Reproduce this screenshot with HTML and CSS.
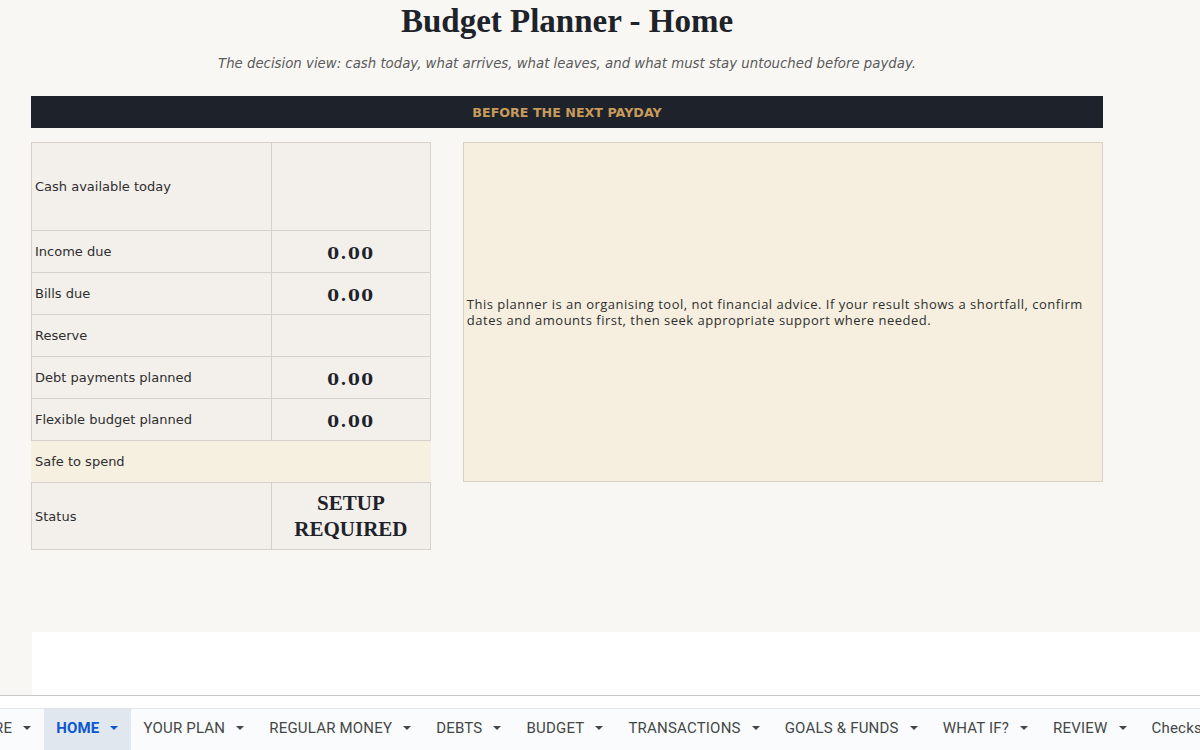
FILE: index.html
```html
<!DOCTYPE html>
<html lang="en">
<head>
<meta charset="utf-8">
<title>Budget Planner - Home</title>
<link rel="stylesheet" href="styles.css">
</head>
<body>
<div class="page">
  <div class="sheet">
    <h1 class="title">Budget Planner - Home</h1>
    <p class="subtitle">The decision view: cash today, what arrives, what leaves, and what must stay untouched before payday.</p>
    <div class="bar">BEFORE THE NEXT PAYDAY</div>
    <div class="content">
      <table class="summary">
        <tr class="tall"><td class="label">Cash available today</td><td class="value"></td></tr>
        <tr><td class="label">Income due</td><td class="value">0.00</td></tr>
        <tr><td class="label">Bills due</td><td class="value">0.00</td></tr>
        <tr><td class="label">Reserve</td><td class="value"></td></tr>
        <tr><td class="label">Debt payments planned</td><td class="value">0.00</td></tr>
        <tr><td class="label">Flexible budget planned</td><td class="value">0.00</td></tr>
        <tr class="safe"><td class="label" colspan="2">Safe to spend</td></tr>
        <tr class="status"><td class="label">Status</td><td class="value big">SETUP<br>REQUIRED</td></tr>
      </table>
      <div class="note">This planner is an organising tool, not financial advice. If your result shows a shortfall, confirm dates and amounts first, then seek appropriate support where needed.</div>
    </div>
  </div>
</div>
<div class="blank"><div class="blank-cells"></div></div>
<div class="scrollbar"></div>
<nav class="tabbar">
  <div class="tab first">RE <svg class="arrow" viewBox="0 0 8 4" width="8" height="4"><path d="M0 0h8L4 4z"/></svg></div>
  <div class="tab active">HOME <svg class="arrow" viewBox="0 0 8 4" width="8" height="4"><path d="M0 0h8L4 4z"/></svg></div>
  <div class="tab">YOUR PLAN <svg class="arrow" viewBox="0 0 8 4" width="8" height="4"><path d="M0 0h8L4 4z"/></svg></div>
  <div class="tab">REGULAR MONEY <svg class="arrow" viewBox="0 0 8 4" width="8" height="4"><path d="M0 0h8L4 4z"/></svg></div>
  <div class="tab">DEBTS <svg class="arrow" viewBox="0 0 8 4" width="8" height="4"><path d="M0 0h8L4 4z"/></svg></div>
  <div class="tab">BUDGET <svg class="arrow" viewBox="0 0 8 4" width="8" height="4"><path d="M0 0h8L4 4z"/></svg></div>
  <div class="tab">TRANSACTIONS <svg class="arrow" viewBox="0 0 8 4" width="8" height="4"><path d="M0 0h8L4 4z"/></svg></div>
  <div class="tab">GOALS &amp; FUNDS <svg class="arrow" viewBox="0 0 8 4" width="8" height="4"><path d="M0 0h8L4 4z"/></svg></div>
  <div class="tab">WHAT IF? <svg class="arrow" viewBox="0 0 8 4" width="8" height="4"><path d="M0 0h8L4 4z"/></svg></div>
  <div class="tab">REVIEW <svg class="arrow" viewBox="0 0 8 4" width="8" height="4"><path d="M0 0h8L4 4z"/></svg></div>
  <div class="tab">Checks</div>
</nav>
</body>
</html>
```
FILE: styles.css
```css
html, body {
  margin: 0;
  padding: 0;
}
body {
  width: 1200px;
  height: 750px;
  overflow: hidden;
  background: #ffffff;
  font-family: "DejaVu Sans", sans-serif;
}
.page {
  height: 632px;
  background: #f8f7f4;
  overflow: hidden;
}
.sheet {
  margin-left: 31px;
  width: 1072px;
  padding-top: 1px;
}
.title {
  margin: 0;
  height: 40px;
  line-height: 40px;
  text-align: center;
  font-family: "Liberation Serif", "DejaVu Serif", serif;
  font-weight: bold;
  font-size: 33px;
  color: #1e2229;
}
.subtitle {
  margin: 14px 0 0;
  height: 18px;
  line-height: 18px;
  text-align: center;
  font-style: italic;
  font-size: 13.3px;
  font-weight: 300;
  color: #5a5a5a;
}
.bar {
  margin-top: 23px;
  height: 32px;
  line-height: 33px;
  background: #1e222a;
  color: #c79a5d;
  text-align: center;
  font-weight: bold;
  font-size: 12.7px;
}
.content {
  margin-top: 14px;
  display: flex;
  gap: 32px;
  align-items: flex-start;
}
.summary {
  border-collapse: collapse;
  width: 401px;
  table-layout: fixed;
}
.summary td {
  border: 1px solid #d6d0ca;
  background: #f3f0ec;
  padding: 0;
  height: 41px;
  color: #2e2e2e;
}
.summary .label {
  width: 236px;
  padding-left: 3px;
  font-size: 13px;
  vertical-align: middle;
}
.summary .value {
  text-align: center;
  font-family: "DejaVu Serif", serif;
  font-weight: bold;
  font-size: 17px;
  letter-spacing: 1.5px;
  line-height: 20px;
  color: #1e2229;
  vertical-align: middle;
  height: 38px;
  padding-top: 3px;
}
.summary .tall td {
  height: 87px;
}
.summary .tall .value {
  height: 84px;
}
.summary .safe td {
  background: #f6f0e1;
  border-left-color: #f6f0e1;
  border-right-color: #f6f0e1;
}
.summary .status td {
  height: 66px;
}
.summary .status .big {
  font-family: "Liberation Serif", serif;
  font-size: 21px;
  letter-spacing: 0;
  line-height: 26px;
  height: 66px;
  padding-top: 0;
}
.note {
  width: 634px;
  height: 338px;
  border: 1px solid #d8d0c3;
  background: #f6efe0;
  display: flex;
  align-items: center;
  padding: 0 3px;
  font-family: "Open Sans", sans-serif;
  font-size: 13px;
  letter-spacing: 0.5px;
  line-height: 16px;
  color: #2e2e2e;
}
.blank {
  height: 63px;
  background: #f8f7f4;
  border-bottom: 1px solid #c8c8c8;
}
.blank-cells {
  margin-left: 32px;
  height: 63px;
  background: #ffffff;
}
.scrollbar {
  height: 12px;
  background: #ffffff;
  border-bottom: 1px solid #e1e3e6;
}
.tabbar {
  height: 41px;
  background: #f9fbfd;
  display: flex;
  font-family: Roboto, "Liberation Sans", sans-serif;
  font-size: 15px;
  color: #444746;
  white-space: nowrap;
}
.tab {
  display: flex;
  align-items: center;
  gap: 11px;
  height: 37px;
  padding: 0 13px 4px 12px;
  letter-spacing: 0.2px;
}
.tab.first {
  margin-left: -18px;
}
.tab.active {
  background: #e1e7ef;
  color: #0b57d0;
  font-weight: bold;
}
.arrow {
  fill: #444746;
  flex: none;
}
.tab.active .arrow {
  fill: #0b57d0;
}
```
